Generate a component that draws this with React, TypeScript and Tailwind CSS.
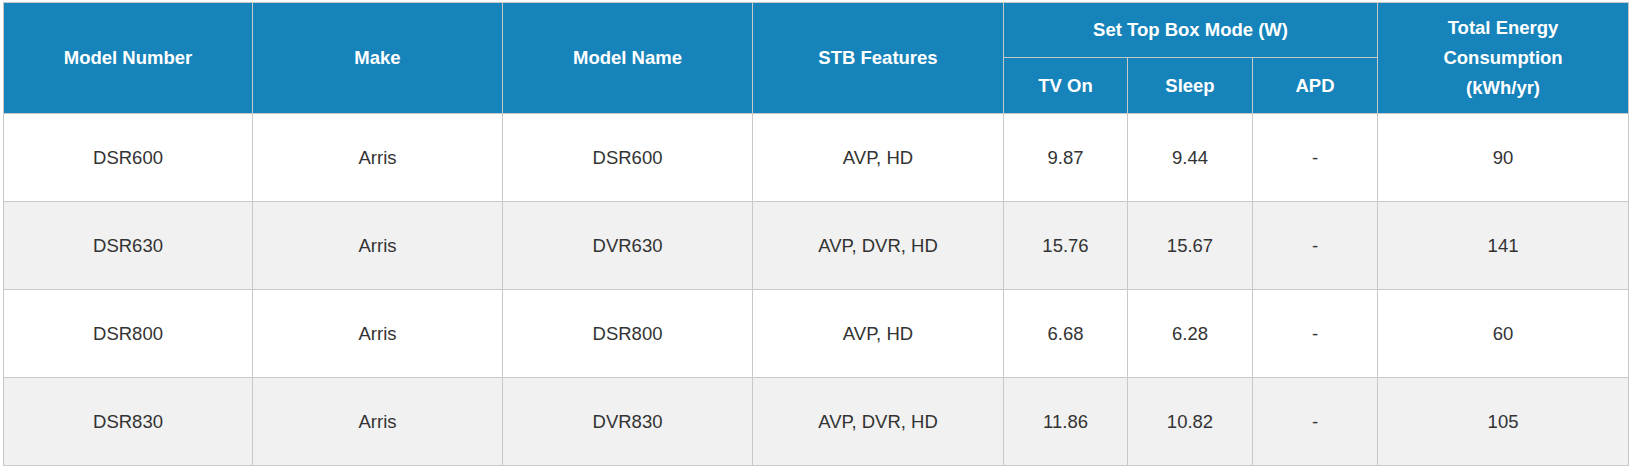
import React from "react";

const rows = [
  ["DSR600", "Arris", "DSR600", "AVP, HD", "9.87", "9.44", "-", "90"],
  ["DSR630", "Arris", "DVR630", "AVP, DVR, HD", "15.76", "15.67", "-", "141"],
  ["DSR800", "Arris", "DSR800", "AVP, HD", "6.68", "6.28", "-", "60"],
  ["DSR830", "Arris", "DVR830", "AVP, DVR, HD", "11.86", "10.82", "-", "105"],
];

const th =
  "border border-[#c9c9c9] bg-[#1684ba] text-white font-bold text-center align-middle text-[18.5px] leading-[30px] p-0";
const td =
  "border border-[#c9c9c9] text-[#333333] text-center align-middle text-[18.5px] leading-[24px] p-0";

export default function App() {
  return (
    <div
      className="bg-white w-[1631px] h-[470px] pl-[3px] pt-[2px]"
      style={{ fontFamily: '"Liberation Sans", Helvetica, Arial, sans-serif' }}
    >
      <table className="border-collapse table-fixed w-[1625px]">
        <colgroup>
          <col className="w-[249px]" />
          <col className="w-[250px]" />
          <col className="w-[250px]" />
          <col className="w-[251px]" />
          <col className="w-[124px]" />
          <col className="w-[125px]" />
          <col className="w-[125px]" />
          <col className="w-[251px]" />
        </colgroup>
        <thead>
          <tr className="h-[55px]">
            <th rowSpan={2} className={th}>Model Number</th>
            <th rowSpan={2} className={th}>Make</th>
            <th rowSpan={2} className={th}>Model Name</th>
            <th rowSpan={2} className={th}>STB Features</th>
            <th colSpan={3} className={th}>Set Top Box Mode (W)</th>
            <th rowSpan={2} className={th}>
              Total Energy
              <br />
              Consumption
              <br />
              (kWh/yr)
            </th>
          </tr>
          <tr className="h-[56px]">
            <th className={th}>TV On</th>
            <th className={th}>Sleep</th>
            <th className={th}>APD</th>
          </tr>
        </thead>
        <tbody>
          {rows.map((r, i) => (
            <tr key={i} className={i % 2 === 1 ? "h-[88px] bg-[#f1f1f1]" : "h-[88px] bg-white"}>
              {r.map((c, j) => (
                <td key={j} className={td}>
                  {c}
                </td>
              ))}
            </tr>
          ))}
        </tbody>
      </table>
    </div>
  );
}
